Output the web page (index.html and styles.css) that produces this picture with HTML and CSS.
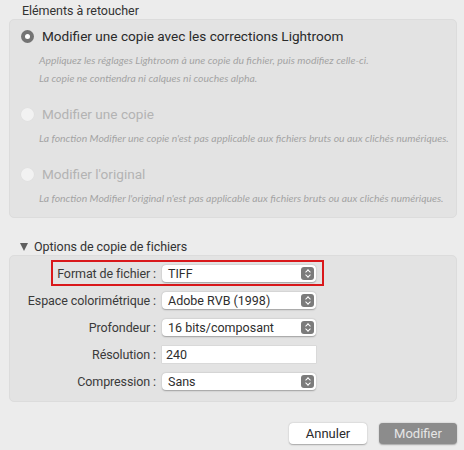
FILE: index.html
```html
<!DOCTYPE html>
<html lang="fr">
<head>
    <meta charset="UTF-8">
    <title>Modifier la photo</title>
    <link rel="stylesheet" href="styles.css">
</head>
<body>
    <div class="dialog">
        <div class="section-title">Eléments à retoucher</div>
        <div class="group">
            <div class="option">
                <div class="option-title"><span class="radio checked"></span>Modifier une copie avec les corrections Lightroom</div>
                <div class="desc">
                    <p>Appliquez les réglages Lightroom à une copie du fichier, puis modifiez celle-ci.</p>
                    <p>La copie ne contiendra ni calques ni couches alpha.</p>
                </div>
            </div>
            <div class="option disabled">
                <div class="option-title"><span class="radio"></span>Modifier une copie</div>
                <div class="desc">
                    <p>La fonction Modifier une copie n'est pas applicable aux fichiers bruts ou aux clichés numériques.</p>
                </div>
            </div>
            <div class="option disabled">
                <div class="option-title"><span class="radio"></span>Modifier l'original</div>
                <div class="desc">
                    <p>La fonction Modifier l'original n'est pas applicable aux fichiers bruts ou aux clichés numériques.</p>
                </div>
            </div>
        </div>

        <div class="section-title disclosure"><span class="triangle"></span>Options de copie de fichiers</div>
        <div class="group options">
            <div class="row">
                <span class="highlight"></span>
                <label>Format de fichier :</label>
                <div class="select">TIFF<span class="stepper"></span></div>
            </div>
            <div class="row">
                <label>Espace colorimétrique :</label>
                <div class="select">Adobe RVB (1998)<span class="stepper"></span></div>
            </div>
            <div class="row">
                <label>Profondeur :</label>
                <div class="select">16 bits/composant<span class="stepper"></span></div>
            </div>
            <div class="row">
                <label>Résolution :</label>
                <div class="field">240</div>
            </div>
            <div class="row">
                <label>Compression :</label>
                <div class="select">Sans<span class="stepper"></span></div>
            </div>
        </div>

        <div class="buttons">
            <button class="btn">Annuler</button>
            <button class="btn primary">Modifier</button>
        </div>
    </div>
</body>
</html>
```

FILE: styles.css
```css
body {
    margin: 0;
    background: #ececec;
    font-family: 'Roboto', 'Liberation Sans', sans-serif;
    color: #333;
}

.dialog {
    width: 464px;
    height: 450px;
    padding-top: 3px;
    box-sizing: border-box;
}

.section-title {
    font-size: 12.5px;
    line-height: 16px;
    height: 16px;
    padding-left: 22px;
    letter-spacing: -0.05px;
}

.section-title.disclosure {
    margin-top: 21px;
    padding-left: 20px;
    display: flex;
    align-items: center;
}

/* disclosure triangle, drawn with borders */
.triangle {
    width: 0;
    height: 0;
    border-left: 4.5px solid transparent;
    border-right: 4.5px solid transparent;
    border-top: 8px solid #5f5f5f;
    margin-right: 6px;
}

.group {
    margin: 0 7px 0 9px;
    background: #e3e3e3;
    border: 1px solid #dcdcdc;
    border-radius: 5px;
    padding: 6px 10px 10px;
}

.option + .option {
    margin-top: 17px;
}

.option-title {
    height: 20px;
    display: flex;
    align-items: center;
    font-size: 13.6px;
    color: #2a2a2a;
}

.option.disabled .option-title {
    color: #b3b3b3;
}

.radio {
    width: 13px;
    height: 13px;
    border-radius: 50%;
    background: #f2f2f2;
    box-shadow: 0 0 0 0.5px #dedede;
    margin-right: 8px;
    margin-left: 1px;
    position: relative;
    flex: none;
}

.radio.checked {
    background: #747474;
    box-shadow: none;
}

.radio.checked::after {
    content: "";
    position: absolute;
    left: 4px;
    top: 4px;
    width: 5px;
    height: 5px;
    border-radius: 50%;
    background: #fff;
}

.desc {
    margin-top: 5px;
    padding-left: 19px;
    font-family: 'Lato', 'Open Sans', sans-serif;
    font-style: italic;
    font-size: 10.4px;
    color: #a3a3a3;
}

.desc p {
    margin: 0;
    line-height: 18px;
    white-space: nowrap;
}

.options {
    padding: 8px 0 11px;
}

.row {
    position: relative;
    display: grid;
    grid-template-columns: 146px 154px;
    column-gap: 6px;
    align-items: center;
    height: 18px;
}

.row + .row {
    margin-top: 9px;
}

.row label {
    text-align: right;
    font-size: 12.5px;
    letter-spacing: -0.1px;
    color: #3a3a3a;
}

.select,
.field {
    height: 17px;
    background: #fff;
    border-radius: 4px;
    box-shadow: 0 0.5px 1.5px rgba(0, 0, 0, 0.3);
    font-size: 12.5px;
    line-height: 17px;
    padding-left: 6px;
    color: #2e2e2e;
    position: relative;
}

.field {
    border-radius: 0;
    box-shadow: 0 0 0 0.5px #cfcfcf;
    padding-left: 4px;
}

.stepper {
    position: absolute;
    right: 2px;
    top: 2px;
    width: 13px;
    height: 13px;
    border-radius: 3px;
    background: #7b7b7b;
}

.stepper::before,
.stepper::after {
    content: "";
    position: absolute;
    left: 4.5px;
    width: 3px;
    height: 3px;
    border-left: 1px solid #fff;
    border-top: 1px solid #fff;
    transform: rotate(45deg);
}

.stepper::before {
    top: 3px;
}

.stepper::after {
    top: 6px;
    transform: rotate(225deg);
}

.highlight {
    position: absolute;
    left: 41px;
    width: 269px;
    top: -4px;
    bottom: -4px;
    border: 2px solid #d9181b;
}

.buttons {
    display: flex;
    justify-content: flex-end;
    gap: 12px;
    margin: 21px 7px 0 0;
}

.btn {
    width: 78px;
    height: 21px;
    border: none;
    border-radius: 4px;
    background: #fff;
    box-shadow: 0 0.5px 1.5px rgba(0, 0, 0, 0.3);
    font-family: 'Roboto', 'Liberation Sans', sans-serif;
    font-size: 13px;
    color: #2a2a2a;
    padding: 0;
}

.btn.primary {
    background: #8c8c8c;
    color: #e6e6e6;
}
```
